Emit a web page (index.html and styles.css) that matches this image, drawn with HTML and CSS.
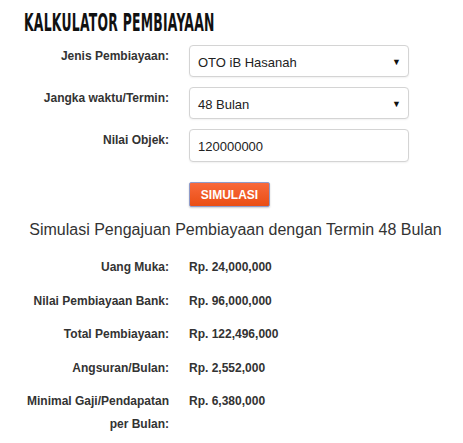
FILE: index.html
```html
<!DOCTYPE html>
<html>
<head>
<meta charset="utf-8">
<link rel="stylesheet" href="styles.css">
</head>
<body>
<div class="page">
  <h1 class="title"><span>Kalkulator Pembiayaan</span></h1>
  <div class="form">
    <div class="label">Jenis Pembiayaan:</div>
    <div class="control select"><span>OTO iB Hasanah</span><span class="arrow">&#9660;</span></div>
    <div class="label">Jangka waktu/Termin:</div>
    <div class="control select"><span>48 Bulan</span><span class="arrow">&#9660;</span></div>
    <div class="label">Nilai Objek:</div>
    <div class="control input">120000000</div>
    <div class="label"></div>
    <div class="btn-cell"><button class="btn">SIMULASI</button></div>
  </div>
  <h2 class="result-title">Simulasi Pengajuan Pembiayaan dengan Termin 48 Bulan</h2>
  <div class="results">
    <div class="rlabel">Uang Muka:</div><div class="rvalue">Rp. 24,000,000</div>
    <div class="rlabel">Nilai Pembiayaan Bank:</div><div class="rvalue">Rp. 96,000,000</div>
    <div class="rlabel">Total Pembiayaan:</div><div class="rvalue">Rp. 122,496,000</div>
    <div class="rlabel">Angsuran/Bulan:</div><div class="rvalue">Rp. 2,552,000</div>
    <div class="rlabel">Minimal Gaji/Pendapatan<br>per Bulan:</div><div class="rvalue">Rp. 6,380,000</div>
  </div>
</div>
</body>
</html>
```

FILE: styles.css
```css
* { box-sizing: border-box; }
body {
  margin: 0;
  background: #fff;
  font-family: "Liberation Sans", Arial, sans-serif;
  color: #333;
}
.page { padding-top: 8px; }
.title {
  margin: 0 0 0 24px;
  font-family: "Liberation Sans Narrow", "DejaVu Sans Condensed", sans-serif;
  font-weight: bold;
  font-size: 25px;
  line-height: 30px;
  color: #111;
  text-transform: uppercase;
  white-space: nowrap;
}
.title span {
  display: inline-block;
  transform: scaleX(0.55);
  transform-origin: left center;
  letter-spacing: 0.5px;
}
.form {
  display: grid;
  grid-template-columns: 169px 220px;
  column-gap: 20px;
  row-gap: 10px;
  margin-top: 7px;
}
.label {
  text-align: right;
  font-size: 12px;
  font-weight: bold;
  line-height: 20px;
  padding-top: 1px;
}
.control {
  height: 32px;
  border: 1px solid #d4d4d4;
  border-radius: 4px;
  background: #fff;
  box-shadow: 0 1px 2px rgba(0,0,0,0.06);
  font-size: 13px;
  color: #222;
  display: flex;
  align-items: center;
  padding: 2px 7px 0 8px;
}
.select { justify-content: space-between; }
.arrow { font-size: 9px; color: #111; }
.input { height: 33px; }
.btn-cell { padding-top: 10px; }
.btn {
  display: block;
  width: 81px;
  height: 25px;
  padding: 0;
  border: 1px solid #8f9bc9;
  border-radius: 2px;
  background: linear-gradient(#f8693b, #ea4e14);
  color: #fff;
  font-family: "Liberation Sans", Arial, sans-serif;
  font-weight: bold;
  font-size: 12px;
  letter-spacing: 0;
  box-shadow: 0 1px 2px rgba(0,0,0,0.2);
}
.result-title {
  margin: 12px 0 0 0;
  text-align: center;
  font-weight: normal;
  font-size: 16px;
  line-height: 22px;
  color: #333;
  padding-left: 8px;
}
.results {
  display: grid;
  grid-template-columns: 169px 200px;
  column-gap: 20px;
  row-gap: 10.5px;
  margin-top: 15px;
  font-size: 12px;
  font-weight: bold;
  line-height: 23px;
}
.rlabel { text-align: right; }
```
